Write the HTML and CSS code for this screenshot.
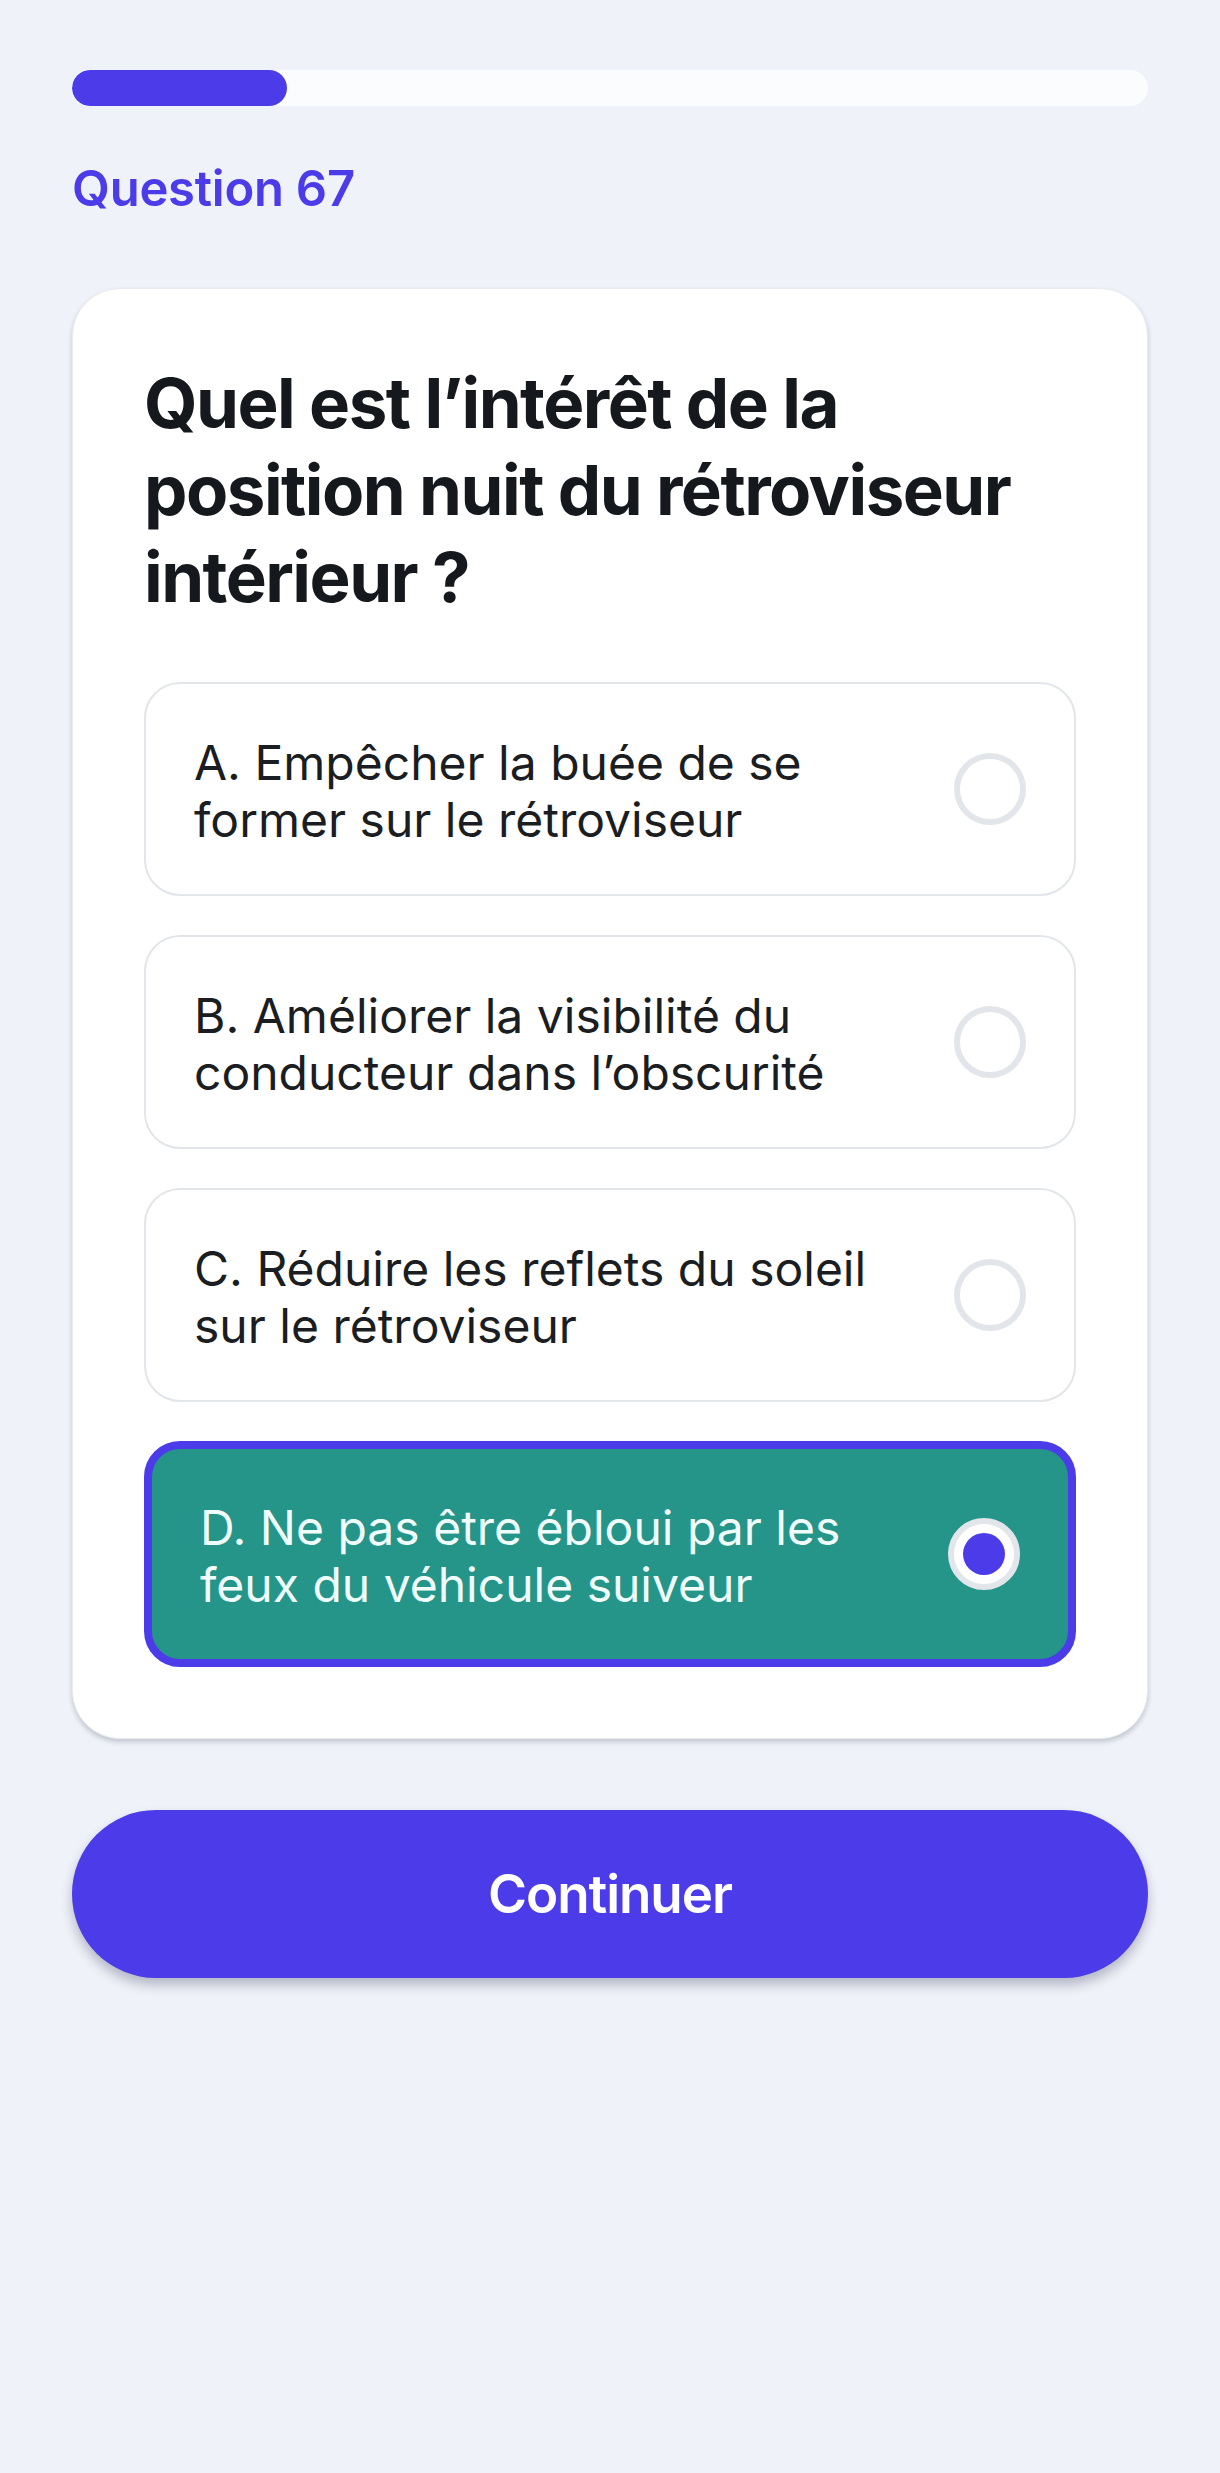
FILE: index.html
```html
<!DOCTYPE html>
<html lang="fr">
<head>
    <meta charset="UTF-8">
    <meta name="viewport" content="width=device-width, initial-scale=1.0">
    <title>Question 67 - Code de la route</title>
    <link rel="stylesheet" href="styles.css">
</head>
<body>
    <div class="quiz-page">
        <div class="progress-track">
            <div class="progress-fill" style="width: 20%;"></div>
        </div>

        <div class="question-label">Question 67</div>

        <div class="question-card">
            <h1 class="question-title">Quel est l’intérêt de la position nuit du rétroviseur intérieur ?</h1>

            <div class="answer-list">
                <div class="answer">
                    <span class="answer-text">A. Empêcher la buée de se former sur le rétroviseur</span>
                    <span class="radio"></span>
                </div>
                <div class="answer">
                    <span class="answer-text">B. Améliorer la visibilité du conducteur dans l’obscurité</span>
                    <span class="radio"></span>
                </div>
                <div class="answer">
                    <span class="answer-text">C. Réduire les reflets du soleil sur le rétroviseur</span>
                    <span class="radio"></span>
                </div>
                <div class="answer selected">
                    <span class="answer-text">D. Ne pas être ébloui par les feux du véhicule suiveur</span>
                    <span class="radio"></span>
                </div>
            </div>
        </div>

        <button class="continue-btn">Continuer</button>
    </div>
</body>
</html>
```

FILE: styles.css
```css
* {
    margin: 0;
    padding: 0;
    box-sizing: border-box;
}

body {
    font-family: Inter, 'Noto Sans', sans-serif;
    background: #eff2f8;
    color: #15181c;
    min-height: 100vh;
}

.quiz-page {
    padding: 70px 72px 80px;
}

.progress-track {
    height: 36px;
    background: #fbfcfe;
    border-radius: 18px;
    overflow: hidden;
}

.progress-fill {
    height: 100%;
    background: #4b3be9;
    border-radius: 18px;
}

.question-label {
    margin-top: 53px;
    font-size: 49px;
    line-height: 60px;
    font-weight: 600;
    color: #4b3be9;
    letter-spacing: -0.005em;
}

.question-card {
    margin-top: 69px;
    background: #ffffff;
    border: 1px solid #e8ebf0;
    border-radius: 48px;
    padding: 71px;
    box-shadow: 0 3px 5px rgba(15, 23, 42, 0.2);
}

.question-title {
    font-size: 69px;
    line-height: 87px;
    font-weight: 700;
    letter-spacing: -0.022em;
    color: #15181c;
}

.answer-list {
    margin-top: 61px;
    display: flex;
    flex-direction: column;
    gap: 39px;
}

.answer {
    display: flex;
    align-items: center;
    gap: 48px;
    padding: 50px 48px 46px;
    border: 2px solid #e2e5ea;
    border-radius: 36px;
    background: #ffffff;
}

.answer-text {
    flex: 1;
    font-size: 48px;
    line-height: 57px;
    color: #1a1d21;
}

.radio {
    flex-shrink: 0;
    width: 72px;
    height: 72px;
    margin-top: -4px;
    border: 6px solid #e2e5ea;
    border-radius: 50%;
    background: transparent;
    display: flex;
    align-items: center;
    justify-content: center;
}

.answer.selected {
    background: #25958a;
    border: 8px solid #4b3be9;
}

.answer.selected .answer-text {
    color: #f0fdfa;
}

.answer.selected .radio {
    background: #ffffff;
}

.answer.selected .radio::after {
    content: '';
    width: 42px;
    height: 42px;
    border-radius: 50%;
    background: #4b3be9;
}

.continue-btn {
    display: block;
    width: 100%;
    height: 168px;
    margin-top: 71px;
    border: none;
    border-radius: 84px;
    background: #4b3be9;
    color: #ffffff;
    font-family: inherit;
    font-size: 53px;
    font-weight: 600;
    letter-spacing: -0.02em;
    box-shadow: 0 7px 12px rgba(30, 30, 70, 0.28);
    cursor: pointer;
}
```
